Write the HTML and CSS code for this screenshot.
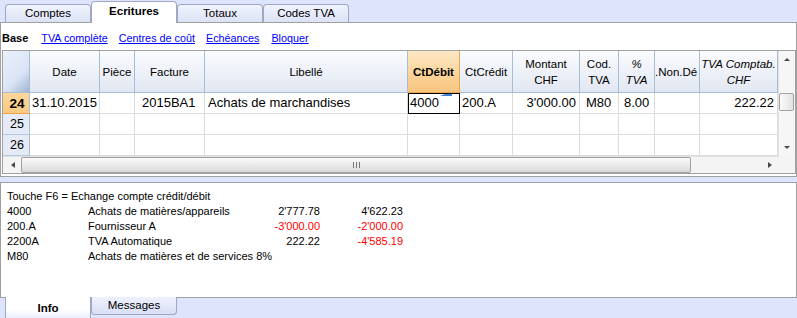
FILE: index.html
```html
<!DOCTYPE html>
<html lang="fr">
<head>
<meta charset="utf-8">
<title>Ecritures</title>
<link rel="stylesheet" href="styles.css">
</head>
<body>
<div class="tabbar">
  <div class="tab">Comptes</div>
  <div class="tab active">Ecritures</div>
  <div class="tab">Totaux</div>
  <div class="tab">Codes TVA</div>
</div>
<div class="panel">
  <div class="toolbar">
    <span class="base">Base</span><a class="lnk l1">TVA complète</a><a class="lnk l2">Centres de coût</a><a class="lnk l3">Echéances</a><a class="lnk l4">Bloquer</a>
  </div>
  <div class="gridbox">
    <div class="gridmain">
      <div class="table">
        <div class="hc corner"></div>
        <div class="hc">Date</div>
        <div class="hc">Pièce</div>
        <div class="hc">Facture</div>
        <div class="hc">Libellé</div>
        <div class="hc sel">CtDébit</div>
        <div class="hc">CtCrédit</div>
        <div class="hc">Montant<br>CHF</div>
        <div class="hc">Cod.<br>TVA</div>
        <div class="hc it">%<br>TVA</div>
        <div class="hc clip">.Non.Dé</div>
        <div class="hc it">TVA Comptab.<br>CHF</div>

        <div class="rh cur">24</div>
        <div class="c">31.10.2015</div>
        <div class="c"></div>
        <div class="c fac">2015BA1</div>
        <div class="c lib">Achats de marchandises</div>
        <div class="c edit">4000<svg class="mark" width="12" height="4" viewBox="0 0 12 4"><path d="M0 3 Q6 0 11 1 L12 0 L12 3 Z" fill="#3a7fd0"/></svg></div>
        <div class="c">200.A</div>
        <div class="c r">3'000.00</div>
        <div class="c cod">M80</div>
        <div class="c pct">8.00</div>
        <div class="c"></div>
        <div class="c r">222.22</div>

        <div class="rh">25</div>
        <div class="c"></div><div class="c"></div><div class="c"></div><div class="c"></div><div class="c"></div><div class="c"></div><div class="c"></div><div class="c"></div><div class="c"></div><div class="c"></div><div class="c"></div>

        <div class="rh">26</div>
        <div class="c"></div><div class="c"></div><div class="c"></div><div class="c"></div><div class="c"></div><div class="c"></div><div class="c"></div><div class="c"></div><div class="c"></div><div class="c"></div><div class="c"></div>
      </div>
      <div class="vscroll">
        <div class="sbtn"><span class="arr up"></span></div>
        <div class="vtrack"><div class="vthumb"></div></div>
        <div class="sbtn"><span class="arr down"></span></div>
      </div>
    </div>
    <div class="hrow">
      <div class="hscroll">
        <div class="sbtn h"><span class="arr left"></span></div>
        <div class="hthumb"><span class="grip"></span></div>
        <div class="htrack"></div>
        <div class="sbtn h"><span class="arr right"></span></div>
      </div>
      <div class="sc-corner"></div>
    </div>
  </div>
</div>
<div class="info">
  <div class="line">Touche F6 = Echange compte crédit/débit</div>
  <div class="irow"><span>4000</span><span>Achats de matières/appareils</span><span class="n">2'777.78</span><span class="n">4'622.23</span></div>
  <div class="irow"><span>200.A</span><span>Fournisseur A</span><span class="n neg">-3'000.00</span><span class="n neg">-2'000.00</span></div>
  <div class="irow"><span>2200A</span><span>TVA Automatique</span><span class="n">222.22</span><span class="n neg">-4'585.19</span></div>
  <div class="irow"><span>M80</span><span class="wide">Achats de matières et de services 8%</span></div>
</div>
<div class="btabs">
  <div class="btab active">Info</div>
  <div class="btab">Messages</div>
</div>
</body>
</html>
```

FILE: styles.css
```css
* { box-sizing: border-box; }
html, body { margin: 0; padding: 0; }
body {
  width: 797px;
  height: 318px;
  overflow: hidden;
  background: #dee4fb;
  font-family: "Liberation Sans", Arial, sans-serif;
  font-size: 11px;
  color: #000;
}

/* top tabs */
.tabbar {
  height: 22px;
  display: flex;
  align-items: flex-end;
  padding-left: 5px;
}
.tab {
  width: 86px;
  height: 18px;
  border: 1px solid #9ea8c2;
  border-bottom: none;
  border-radius: 4px 4px 0 0;
  background: linear-gradient(#f1f4fe, #dce2f6);
  text-align: center;
  line-height: 17px;
  font-size: 11.5px;
}
.tab.active {
  height: 22px;
  margin-bottom: -1px;
  background: #fff;
  font-weight: bold;
  line-height: 19px;
  position: relative;
  z-index: 1;
}

/* main panel */
.panel {
  background: #fff;
  border: 1px solid #a0a0a0;
  height: 155px;
  padding-bottom: 2px;
}
.toolbar {
  height: 27px;
  padding-top: 3px;
  line-height: 24px;
  font-size: 11px;
  white-space: nowrap;
}
.toolbar .base { margin-left: 1px; font-weight: bold; }
.lnk { color: #0000ff; text-decoration: underline; font-size: 10.8px; }
.l1 { margin-left: 13px; }
.l2 { margin-left: 11px; }
.l3 { margin-left: 11px; }
.l4 { margin-left: 12px; }

.gridbox {
  margin-left: 1px;
  border: 1px solid #a0a0a0;
  height: 124px;
  display: flex;
  flex-direction: column;
}
.gridmain { display: flex; height: 105px; }
.table {
  width: 775px;
  display: grid;
  grid-template-columns: 27px 70px 35px 70px 203px 52px 53px 67px 39px 36px 45px 78px;
  grid-template-rows: 42px 21px 21px 21px;
}
.hc {
  border-right: 1px solid #a7bdd6;
  border-bottom: 1px solid #a7bdd6;
  background: linear-gradient(#fafbfe, #e1e7f2);
  display: flex;
  align-items: center;
  justify-content: center;
  text-align: center;
  line-height: 16px;
  font-size: 11.5px;
  white-space: nowrap;
  overflow: hidden;
}
.hc.corner {
  background: linear-gradient(135deg, #eaf0fb 0%, #dbe4f6 62%, #9fb4d2 100%);
}
.hc.sel {
  background: linear-gradient(#fde8c4, #f8c47c);
  border-right-color: #eca653;
  border-bottom-color: #eca653;
  font-weight: bold;
}
.hc.it { font-style: italic; }
.hc.clip { justify-content: flex-start; }

.rh {
  border-right: 1px solid #a7bdd6;
  border-bottom: 1px solid #b6c9df;
  background: #e4ebf6;
  font-size: 12.5px;
  display: flex;
  align-items: center;
  justify-content: center;
  padding-left: 2px;
}
.rh.cur {
  background: linear-gradient(#fdd79a, #f9c982);
  border-bottom-color: #f0a047;
  font-weight: bold;
  font-size: 13.5px;
}
.c {
  border-right: 1px solid #dcdcdc;
  border-bottom: 1px solid #dcdcdc;
  font-size: 13px;
  line-height: 20px;
  padding-left: 2px;
  white-space: nowrap;
  overflow: hidden;
}
.c.r { text-align: right; padding-right: 3px; }
.c.fac { padding-left: 7px; }
.c.lib { padding-left: 3px; }
.c.cod { padding-left: 6px; }
.c.pct { padding-left: 5px; }
.c.edit {
  outline: 1px solid #000;
  outline-offset: -1px;
  position: relative;
  overflow: visible;
}
.mark { position: absolute; left: 32px; top: 0; }

/* scrollbars */
.vscroll {
  width: 17px;
  display: flex;
  flex-direction: column;
  background: #f6f6f6;
  border-left: 1px solid #e2e2e2;
}
.sbtn {
  height: 17px;
  display: flex;
  align-items: center;
  justify-content: center;
  flex: none;
}
.sbtn.h { width: 17px; height: 100%; }
.vtrack { flex: 1; padding-top: 25px; }
.vthumb {
  height: 18px;
  margin: 0 1px 0 0;
  border: 1px solid #a2a2a2;
  border-radius: 2px;
  background: linear-gradient(90deg, #fbfbfb, #e2e2e2);
}
.arr { width: 0; height: 0; display: block; }
.arr.up { border-left: 3px solid transparent; border-right: 3px solid transparent; border-bottom: 3px solid #4a4a4a; }
.arr.down { border-left: 3px solid transparent; border-right: 3px solid transparent; border-top: 3px solid #4a4a4a; }
.arr.left { border-top: 3px solid transparent; border-bottom: 3px solid transparent; border-right: 4px solid #4a4a4a; margin-left: 2px; }
.arr.right { border-top: 3px solid transparent; border-bottom: 3px solid transparent; border-left: 4px solid #4a4a4a; }

.hrow { display: flex; height: 17px; }
.hscroll {
  width: 775px;
  display: flex;
  background: #f4f4f4;
  border-top: 1px solid #e0e0e0;
}
.hthumb {
  width: 670px;
  margin-left: 1px;
  border: 1px solid #a2a2a2;
  border-radius: 2px;
  background: linear-gradient(#fbfbfb, #dadada);
  display: flex;
  align-items: center;
  justify-content: center;
}
.grip {
  width: 7px;
  height: 6px;
  border-left: 1px solid #777;
  border-right: 1px solid #777;
  background: linear-gradient(90deg, transparent 2px, #777 2px, #777 3px, transparent 3px);
}
.htrack { flex: 1; }
.sc-corner { flex: 1; background: #f4f4f4; }

/* info panel */
.info {
  margin-top: 5px;
  height: 116px;
  background: #fff;
  border: 1px solid #a0a0a0;
  padding: 6px 0 0 6px;
  line-height: 15px;
  font-size: 11px;
}
.irow {
  display: grid;
  grid-template-columns: 81px 157px 75px 83px;
}
.irow .n { text-align: right; }
.irow .wide { grid-column: 2 / 5; }
.neg { color: #ff0000; }

/* bottom tabs */
.btabs {
  display: flex;
  padding-left: 5px;
  margin-top: -1px;
  position: relative;
}
.btab {
  width: 86px;
  height: 18px;
  border: 1px solid #9ea8c2;
  border-top: none;
  border-radius: 0 0 4px 4px;
  background: linear-gradient(#eef1fd, #d9dff5);
  text-align: center;
  line-height: 17px;
  font-size: 11.5px;
}
.btab.active {
  height: 22px;
  background: linear-gradient(#fff 60%, #e6eafb);
  border-radius: 0;
  border-bottom: none;
  font-weight: bold;
  line-height: 23px;
}
```
